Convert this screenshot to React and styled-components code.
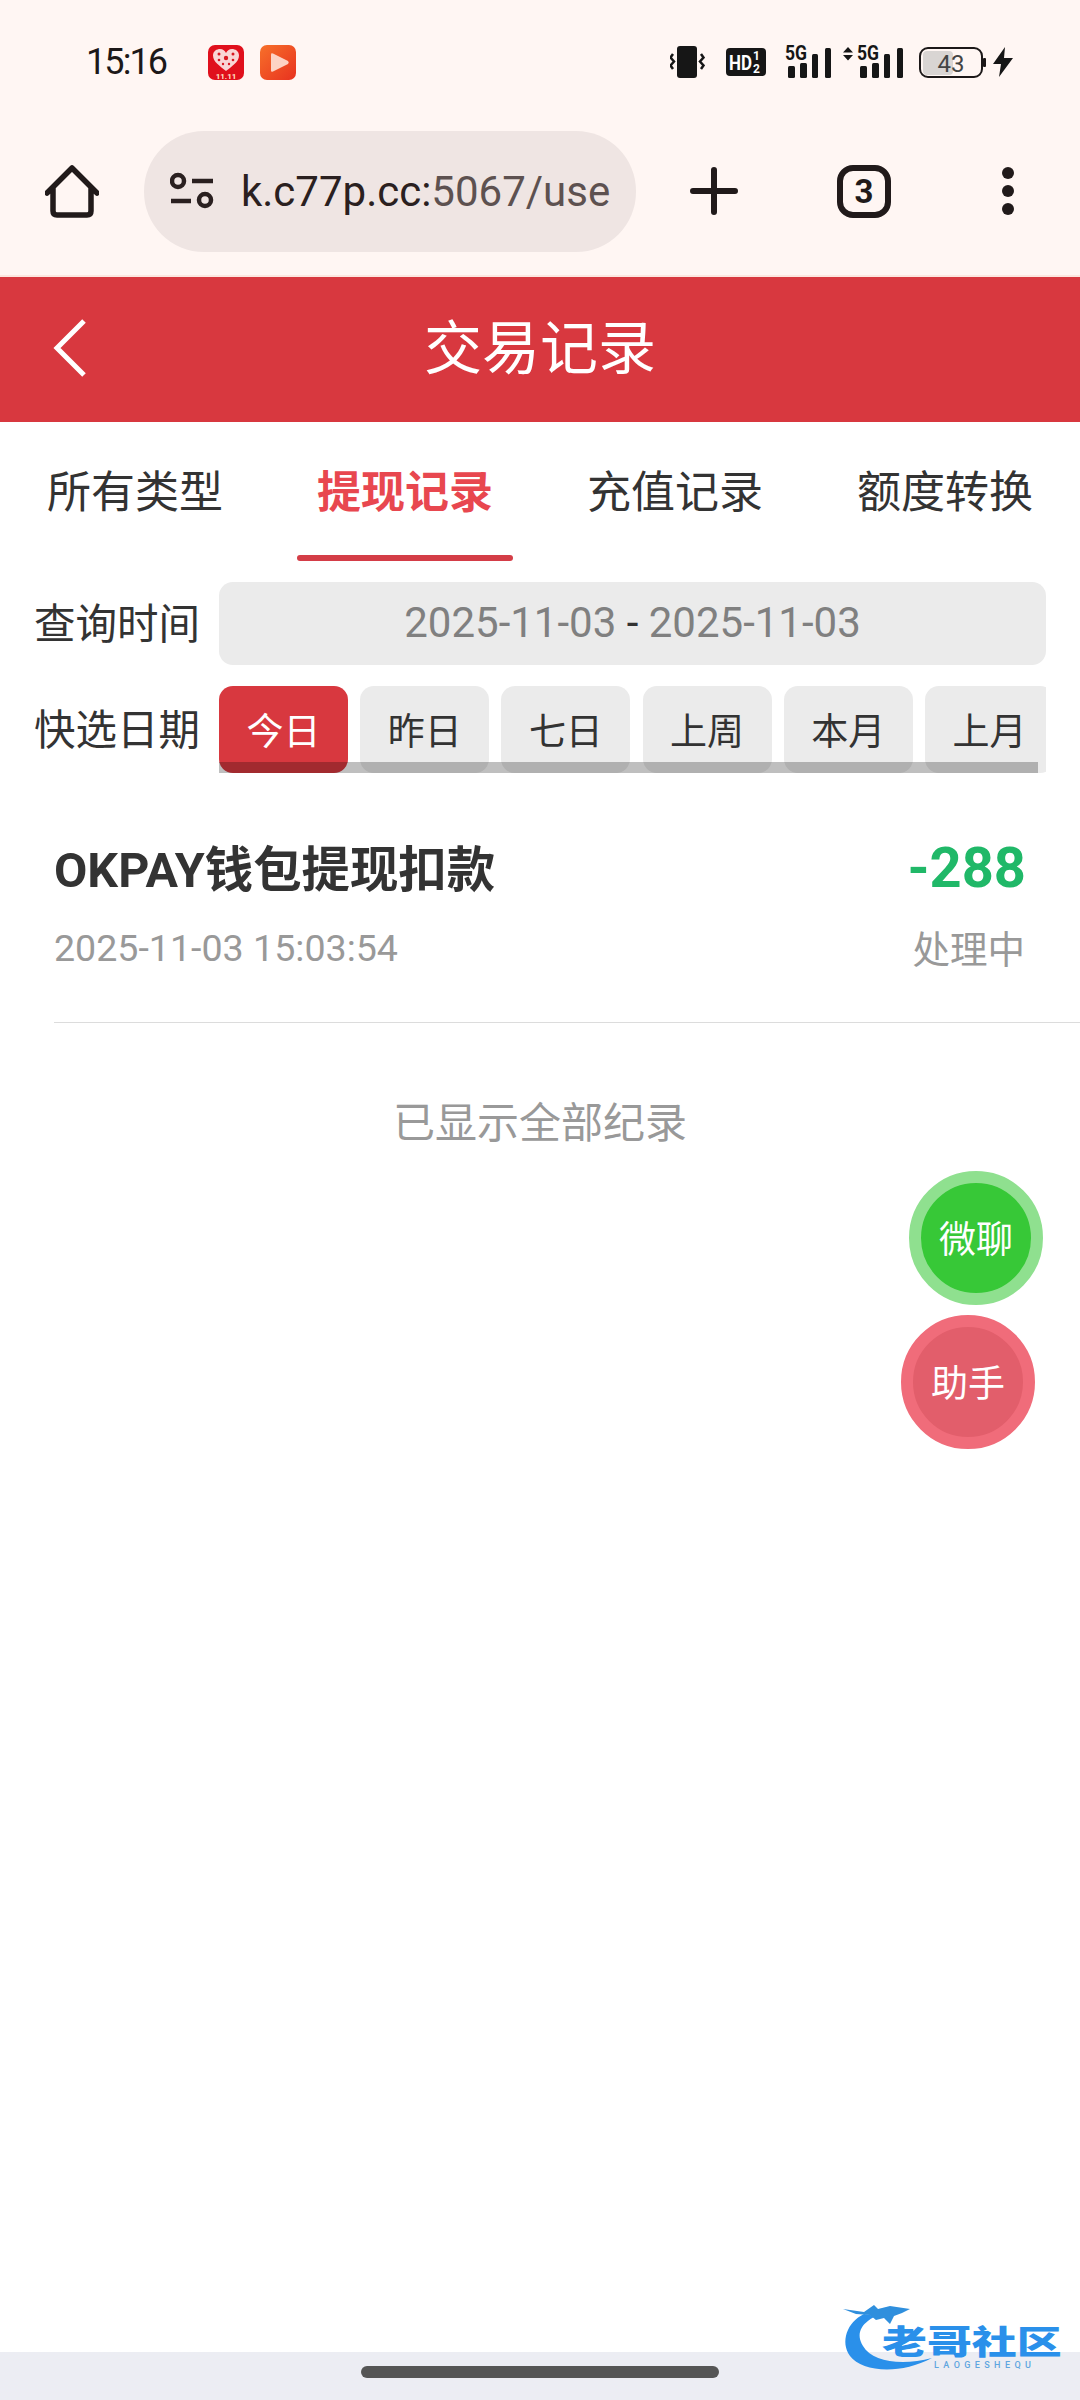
import React from 'react';
import styled, { createGlobalStyle } from 'styled-components';

const GlobalStyle = createGlobalStyle`
  html, body {
    margin: 0;
    padding: 0;
    background: #fff;
    overflow: hidden;
  }
  * {
    box-sizing: border-box;
  }
`;

const Page = styled.div`
  position: relative;
  width: 1080px;
  height: 2400px;
  display: flex;
  flex-direction: column;
  background: #fff;
  color: #333;
  font-family: Roboto, "Noto Sans CJK SC", sans-serif;
`;

const Chrome = styled.div`
  height: 277px;
  background: #fff6f3;
  border-bottom: 2px solid #fde6df;
`;

const StatusBar = styled.div`
  height: 116px;
  display: flex;
  align-items: center;
  padding: 8px 67px 0 86px;
`;

const Time = styled.span`
  width: 122px;
  font-size: 36px;
  letter-spacing: -1.9px;
  color: #1c1818;
`;

const AppIcons = styled.div`
  display: flex;
  gap: 16px;
`;

const StatusIcons = styled.div`
  margin-left: auto;
  display: flex;
  align-items: center;
`;

const StatusIcon = styled.svg`
  display: block;
  margin-left: ${p => p.$gap || 0}px;
  margin-bottom: ${p => p.$lift || 0}px;
`;

const Toolbar = styled.div`
  height: 150px;
  display: flex;
  align-items: center;
  padding-left: 45px;
`;

const ToolIcon = styled.svg`
  display: block;
  flex-shrink: 0;
  margin-left: ${p => p.$gap || 0}px;
`;

const AddressPill = styled.div`
  width: 492px;
  height: 121px;
  margin-left: 45px;
  padding-left: 26px;
  display: flex;
  align-items: center;
  border-radius: 60px;
  background: #efe5e3;
  overflow: hidden;
`;

const Url = styled.span`
  margin-left: 27px;
  font-size: 42px;
  white-space: nowrap;
  color: #5d5150;
  b {
    font-weight: 400;
    color: #2a2020;
  }
`;

const Header = styled.header`
  position: relative;
  height: 145px;
  display: flex;
  align-items: center;
  justify-content: center;
  padding-bottom: 12px;
  background: #d8383f;
`;

const BackIcon = styled.svg`
  position: absolute;
  left: 50px;
  top: 40px;
`;

const Title = styled.h1`
  margin: 0;
  font-size: 58px;
  font-weight: 400;
  color: #fff;
`;

const Tabs = styled.nav`
  height: 139px;
  display: grid;
  grid-template-columns: repeat(4, 270px);
`;

const Tab = styled.div`
  position: relative;
  display: flex;
  align-items: center;
  justify-content: center;
  padding-bottom: 5px;
  font-size: 44px;
  font-weight: ${p => (p.$active ? 700 : 400)};
  color: ${p => (p.$active ? '#e8474f' : '#333')};

  ${p =>
    p.$active &&
    `
    &::after {
      content: '';
      position: absolute;
      left: 27px;
      right: 27px;
      bottom: 0;
      height: 6px;
      border-radius: 3px;
      background: #d43d47;
    }
  `}
`;

const Filters = styled.section`
  padding: 21px 34px 0;
  display: flex;
  flex-direction: column;
  gap: 21px;
`;

const FilterRow = styled.div`
  display: flex;
  align-items: center;
`;

const FilterLabel = styled.span`
  width: 185px;
  flex-shrink: 0;
  padding-bottom: 5px;
  font-size: 41.5px;
  color: #333;
`;

const DateField = styled.div`
  width: 827px;
  height: 83px;
  display: flex;
  align-items: center;
  justify-content: center;
  padding-bottom: 2px;
  border-radius: 14px;
  background: #ebebeb;
  font-size: 42px;
  color: #808080;
  white-space: pre;
  i {
    font-style: normal;
    color: #333;
  }
`;

const ChipScroller = styled.div`
  position: relative;
  width: 827px;
  height: 87px;
  display: flex;
  gap: 12.2px;
  overflow: hidden;
`;

const Chip = styled.div`
  flex: 0 0 129px;
  display: flex;
  align-items: center;
  justify-content: center;
  padding-bottom: 2px;
  border-radius: 14px;
  font-size: 37px;
  background: ${p => (p.$active ? '#d8383f' : '#ebebeb')};
  color: ${p => (p.$active ? '#fff' : '#333')};
`;

const ScrollThumb = styled.div`
  position: absolute;
  left: 0;
  bottom: 0;
  width: 819px;
  height: 11px;
  background: rgba(0, 0, 0, 0.25);
`;

const Record = styled.article`
  margin: 64px 0 0 54px;
  padding: 0 55px 50px 0;
  border-bottom: 1px solid #dcdcdc;
`;

const RecordLine = styled.div`
  display: flex;
  align-items: center;
  justify-content: space-between;
  height: ${p => p.$height}px;
  margin-top: ${p => p.$top || 0}px;
`;

const RecordName = styled.span`
  padding-bottom: 2px;
  font-size: 48.4px;
  font-weight: 700;
  color: #333;
`;

const Amount = styled.span`
  padding-top: 1px;
  margin-right: -1px;
  font-size: 56px;
  font-weight: 700;
  color: #20b868;
`;

const RecordTime = styled.span`
  padding-top: 2px;
  font-size: 37.6px;
  color: #999;
`;

const RecordStatus = styled.span`
  padding-bottom: 2px;
  font-size: 37.5px;
  color: #999;
`;

const EndNote = styled.div`
  margin-top: 71px;
  height: 60px;
  line-height: 60px;
  text-align: center;
  font-size: 42px;
  color: #999;
`;

const FloatButton = styled.div`
  position: absolute;
  left: ${p => p.$left}px;
  top: ${p => p.$top}px;
  width: 134px;
  height: 134px;
  display: flex;
  align-items: center;
  justify-content: center;
  padding-bottom: 3px;
  border-radius: 50%;
  border: 12px solid ${p => p.$ring};
  background: ${p => p.$fill};
  color: #fff;
  font-size: 37px;
`;

const HomeBar = styled.div`
  margin-top: auto;
  height: 48px;
  display: flex;
  justify-content: center;
  padding-top: 14px;
  background: #ecedf3;
`;

const HomePill = styled.div`
  width: 358px;
  height: 12px;
  border-radius: 6px;
  background: #555;
`;

const Watermark = styled.div`
  position: absolute;
  left: 840px;
  top: 2300px;
  width: 230px;
  height: 76px;
  color: #2a90ea;
`;

const WatermarkName = styled.span`
  position: absolute;
  left: 42px;
  top: 26px;
  font-size: 33px;
  line-height: 34px;
  font-weight: 900;
  white-space: nowrap;
  transform: scaleX(1.36);
  transform-origin: left center;
`;

const WatermarkSub = styled.span`
  position: absolute;
  left: 94px;
  top: 60px;
  font-size: 9px;
  line-height: 10px;
  letter-spacing: 4.4px;
  font-weight: 500;
  color: #5fa6e0;
`;

const HeartAppIcon = () => (
  <svg width="36" height="35" viewBox="0 0 36 35">
    <rect width="36" height="35" rx="7" fill="#e0101c" />
    <path d="M18 26 C12 21 5 17 5 10.500 C5 6 9 4 12 4 C15 4 17 6 18 8 C19 6 21 4 24 4 C27 4 31 6 31 10.500 C31 17 24 21 18 26 Z" fill="#f9d6d6" />
    <g fill="#d81822">
      <circle cx="11" cy="9" r="1.500" />
      <circle cx="25" cy="9" r="1.500" />
      <circle cx="18" cy="13" r="2.200" />
      <circle cx="11" cy="15" r="1.300" />
      <circle cx="25" cy="15" r="1.300" />
      <circle cx="15" cy="19" r="1.200" />
      <circle cx="21" cy="19" r="1.200" />
    </g>
    <text x="18" y="34" textAnchor="middle" fontSize="8" fontWeight="700" fill="#ffe3c8" fontFamily="Roboto, sans-serif">11.11</text>
  </svg>
);

const PlayAppIcon = () => (
  <svg width="36" height="35" viewBox="0 0 36 35">
    <defs>
      <linearGradient id="playBg" x1="0" y1="0" x2="1" y2="1">
        <stop offset="0" stopColor="#f7702a" />
        <stop offset="1" stopColor="#e8321f" />
      </linearGradient>
    </defs>
    <rect width="36" height="35" rx="7" fill="url(#playBg)" />
    <path d="M11 9.500 Q11 7.500 13 8.500 L28 16 Q29.500 17.500 28 19 L13 26.500 Q11 27.500 11 25.500 Z" fill="#fdd3c4" />
  </svg>
);

const Signal = ({ gap, arrows }) => {
  const offset = arrows ? 14 : 0;
  return (
    <StatusIcon $gap={gap} $lift={6} width={46 + offset} height="38" viewBox={`0 -6 ${46 + offset} 38`}>
      {arrows && <path d="M5 1 L10 6.500 L0 6.500 Z M0 9 L10 9 L5 14.500 Z" fill="#161616" />}
      <text x={offset} y="14" fontSize="20" fontWeight="700" fill="#161616" fontFamily="Roboto, sans-serif" textLength="22" lengthAdjust="spacingAndGlyphs">5G</text>
      <g fill="#161616">
        <rect x={offset + 3} y="20" width="7" height="12" rx="1.500" />
        <rect x={offset + 15} y="17" width="7" height="15" rx="1.500" />
        <rect x={offset + 27} y="8" width="6" height="24" rx="1.500" />
        <rect x={offset + 40} y="2" width="6" height="30" rx="1.500" />
      </g>
    </StatusIcon>
  );
};

function App() {
  const chips = ['今日', '昨日', '七日', '上周', '本月', '上月'];

  return (
    <Page>
      <GlobalStyle />
      <Chrome>
        <StatusBar>
          <Time>15:16</Time>
          <AppIcons>
            <HeartAppIcon />
            <PlayAppIcon />
          </AppIcons>
          <StatusIcons>
            <StatusIcon width="35" height="34" viewBox="0 0 35 34">
              <rect x="7" y="1" width="20" height="32" rx="3" fill="#161616" />
              <path d="M3 9 L0.500 12.500 L4 16.500 L0.500 20.500 L3 24 M31 9 L33.500 12.500 L30 16.500 L33.500 20.500 L31 24" fill="none" stroke="#161616" strokeWidth="2.500" />
            </StatusIcon>
            <StatusIcon $gap={21} width="40" height="28" viewBox="0 0 40 28">
              <rect width="40" height="28" rx="4" fill="#161616" />
              <text x="3" y="22" fontSize="21" fontWeight="700" fill="#fff" fontFamily="Roboto, sans-serif" textLength="23" lengthAdjust="spacingAndGlyphs">HD</text>
              <text x="27" y="12" fontSize="12" fontWeight="700" fill="#fff" fontFamily="Roboto, sans-serif">1</text>
              <text x="27" y="25" fontSize="12" fontWeight="700" fill="#fff" fontFamily="Roboto, sans-serif">2</text>
            </StatusIcon>
            <Signal gap={19} />
            <Signal gap={12} arrows />
            <StatusIcon $gap={16} width="67" height="32" viewBox="0 0 67 32">
              <rect x="4" y="5" width="30" height="24" rx="4" fill="#d9d5d3" />
              <rect x="1" y="2" width="62" height="29" rx="8" fill="none" stroke="#1c1818" strokeWidth="2" />
              <rect x="64" y="12" width="3" height="9" rx="1" fill="#1c1818" />
              <text x="32" y="26" textAnchor="middle" fontSize="24" fill="#444" fontFamily="Roboto, sans-serif">43</text>
            </StatusIcon>
            <StatusIcon $gap={7} width="20" height="32" viewBox="0 0 20 32">
              <path d="M12 1 L0 18 L8 18 L6 31 L20 12 L11 12 Z" fill="#161616" />
            </StatusIcon>
          </StatusIcons>
        </StatusBar>
        <Toolbar>
          <ToolIcon width="54" height="53" viewBox="0 0 54 53">
            <path d="M2 28 L27 3 L52 28 M8 23 L8 46 Q8 50 12 50 L42 50 Q46 50 46 46 L46 23" fill="none" stroke="#211a1a" strokeWidth="5.500" strokeLinecap="round" strokeLinejoin="round" />
          </ToolIcon>
          <AddressPill>
            <svg width="44" height="38" viewBox="0 0 44 38">
              <g fill="none" stroke="#2a2020" strokeWidth="4.500">
                <circle cx="8" cy="9" r="6" />
                <circle cx="35" cy="28" r="6" />
              </g>
              <path d="M22 9 L43 9 M1 29 L21 29" stroke="#2a2020" strokeWidth="4.500" />
            </svg>
            <Url><b>k.c77p.cc:</b>5067/use</Url>
          </AddressPill>
          <ToolIcon $gap={54} width="48" height="48" viewBox="0 0 48 48">
            <path d="M3 24 L45 24 M24 3 L24 45" stroke="#211a1a" strokeWidth="6" strokeLinecap="round" />
          </ToolIcon>
          <ToolIcon $gap={99} width="54" height="53" viewBox="0 0 54 53">
            <rect x="3" y="3" width="48" height="47" rx="13" fill="none" stroke="#211a1a" strokeWidth="6" />
            <text x="27" y="38" textAnchor="middle" fontSize="33" fontWeight="700" fill="#211a1a" fontFamily="Roboto, sans-serif">3</text>
          </ToolIcon>
          <ToolIcon $gap={111} width="12" height="48" viewBox="0 0 12 48">
            <g fill="#211a1a">
              <circle cx="6" cy="6" r="6" />
              <circle cx="6" cy="24" r="6" />
              <circle cx="6" cy="42" r="6" />
            </g>
          </ToolIcon>
        </Toolbar>
      </Chrome>

      <Header>
        <BackIcon width="40" height="62" viewBox="0 0 40 62">
          <path d="M34 4 L7 31 L34 58" fill="none" stroke="#fff" strokeWidth="5" />
        </BackIcon>
        <Title>交易记录</Title>
      </Header>

      <Tabs>
        <Tab>所有类型</Tab>
        <Tab $active>提现记录</Tab>
        <Tab>充值记录</Tab>
        <Tab>额度转换</Tab>
      </Tabs>

      <Filters>
        <FilterRow>
          <FilterLabel>查询时间</FilterLabel>
          <DateField>2025-11-03 <i>-</i> 2025-11-03</DateField>
        </FilterRow>
        <FilterRow>
          <FilterLabel>快选日期</FilterLabel>
          <ChipScroller>
            {chips.map((c, i) => (
              <Chip key={c} $active={i === 0}>{c}</Chip>
            ))}
            <ScrollThumb />
          </ChipScroller>
        </FilterRow>
      </Filters>

      <Record>
        <RecordLine $height={60}>
          <RecordName>OKPAY钱包提现扣款</RecordName>
          <Amount>-288</Amount>
        </RecordLine>
        <RecordLine $height={50} $top={25}>
          <RecordTime>2025-11-03 15:03:54</RecordTime>
          <RecordStatus>处理中</RecordStatus>
        </RecordLine>
      </Record>

      <EndNote>已显示全部纪录</EndNote>

      <FloatButton $left={909} $top={1171} $ring="#8fe08f" $fill="#37c837">微聊</FloatButton>
      <FloatButton $left={901} $top={1315} $ring="#f06c7a" $fill="#e25e6b">助手</FloatButton>

      <HomeBar>
        <HomePill />
      </HomeBar>

      <Watermark>
        <svg width="110" height="76" viewBox="0 0 110 76">
          <path d="M24 14 C7 22 0 42 10 56 C22 72 60 75 92 58 C62 66 32 62 23 46 C16 34 20 24 36 16 Z" fill="#2a90ea" />
          <path d="M3 9 L24 12 L34 5 L38 9 L50 6 L70 9 L62 13 L54 16 L50 24 L44 18 L36 20 L30 15 L16 14 Z" fill="#2f8fdd" />
        </svg>
        <WatermarkName>老哥社区</WatermarkName>
        <WatermarkSub>LAOGESHEQU</WatermarkSub>
      </Watermark>
    </Page>
  );
}

export default App;
